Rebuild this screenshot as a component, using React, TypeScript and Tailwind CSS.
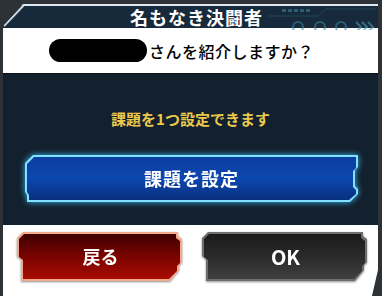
const font = { fontFamily: '"Noto Sans CJK JP", "Noto Sans", sans-serif' };

function HeaderDeco() {
  return (
    <svg width="110" height="24" viewBox="0 0 110 24" className="absolute right-0 top-0 opacity-60">
      <g fill="#3f7f96">
        <rect x="14" y="3" width="4" height="3" />
        <rect x="20" y="3" width="4" height="3" />
        <rect x="26" y="3" width="4" height="3" />
        <rect x="32" y="3" width="4" height="3" />
        <rect x="38" y="3" width="4" height="3" />
      </g>
      <path d="M0 10 L50 10 L58 3 L108 3" stroke="#2a5a6e" strokeWidth="1" fill="none" />
      <g stroke="#3a8099" strokeWidth="2" fill="none">
        <circle cx="30" cy="21" r="5" />
        <circle cx="52" cy="21" r="5" />
        <circle cx="73" cy="21" r="5" />
      </g>
      <g stroke="#4a9ab4" strokeWidth="2" fill="none">
        <path d="M88 16 L93 21 L88 26" />
        <path d="M94 16 L99 21 L94 26" />
        <path d="M100 16 L105 21 L100 26" />
      </g>
    </svg>
  );
}

function GameButton({
  label,
  outer,
  inner,
  text,
}: {
  label: string;
  outer: string;
  inner: string;
  text: string;
}) {
  return (
    <div className="drop-shadow-[0_1px_1px_rgba(0,0,0,0.45)]">
      <div
        className={`w-[165px] h-[49px] p-[2px] ${outer} [clip-path:polygon(6px_0,calc(100%_-_4px)_0,calc(100%_-_4px)_4px,100%_7px,100%_30px,calc(100%_-_3px)_33px,calc(100%_-_3px)_38px,calc(100%_-_12px)_100%,4px_100%,4px_27px,0_24px,0_6px)]`}
      >
        <div
          className={`w-full h-full flex items-center justify-center ${inner} [clip-path:polygon(5px_0,calc(100%_-_4px)_0,calc(100%_-_4px)_4px,100%_7px,100%_29px,calc(100%_-_3px)_32px,calc(100%_-_3px)_37px,calc(100%_-_11px)_100%,4px_100%,4px_26px,0_23px,0_5px)]`}
        >
          <span className={`${text} font-bold text-white pl-[2px]`} style={font}>
            {label}
          </span>
        </div>
      </div>
    </div>
  );
}

export default function App() {
  return (
    <div className="w-[382px] h-[296px] overflow-hidden bg-[#2c3236] pt-[4px] pl-[3px]" style={font}>
      <div className="w-[375px] h-[292px] flex flex-col bg-[#0f1822] [clip-path:polygon(20px_0,100%_0,100%_calc(100%_-_26px),calc(100%_-_6px)_100%,0_100%,0_22px)]">
        {/* header */}
        <div className="relative h-[24px] shrink-0 bg-[#172a3c] border-t-2 border-[#dfe7ee] flex items-end justify-center pl-[12px]">
          <HeaderDeco />
          <svg width="22" height="24" viewBox="0 0 22 24" className="absolute left-0 -top-[2px]">
            <path d="M21 1 L1 22" stroke="#c9d6e0" strokeWidth="2" />
          </svg>
          <span className="relative text-[18px] leading-[22px] font-bold text-white tracking-[1px]">
            名もなき決闘者
          </span>
        </div>

        {/* question */}
        <div className="h-[46px] shrink-0 bg-white border-b border-[#0a1016] flex items-center justify-center pr-[18px]">
          <div className="w-[98px] h-[23px] rounded-full bg-black" />
          <span className="text-[16px] font-medium text-black leading-none pl-[2px] tracking-[0.5px]">
            さんを紹介しますか？
          </span>
        </div>

        {/* body */}
        <div className="h-[151px] shrink-0 bg-[#13202d] flex flex-col items-center pt-[34px]">
          <span className="text-[15px] leading-[22px] font-bold text-[#ebc94c]">課題を1つ設定できます</span>
          <div className="mt-[25px] ml-[2px] drop-shadow-[0_0_3px_#36b6ee]">
            <div className="w-[333px] h-[47px] p-[2px] bg-[#7fe0ff] [clip-path:polygon(8px_0,100%_0,100%_12px,calc(100%_-_3px)_15px,calc(100%_-_3px)_31px,100%_34px,100%_39px,calc(100%_-_8px)_100%,2px_100%,2px_40px,0_37px,0_8px)]">
              <div className="w-full h-full flex items-center justify-center bg-gradient-to-b from-[#0b3e9e] via-[#0c47b0] to-[#09307e] [clip-path:polygon(7px_0,100%_0,100%_11px,calc(100%_-_3px)_14px,calc(100%_-_3px)_30px,100%_33px,100%_37px,calc(100%_-_7px)_100%,2px_100%,2px_38px,0_35px,0_7px)]">
                <span className="text-[18px] font-bold text-white tracking-[1px]">課題を設定</span>
              </div>
            </div>
          </div>
        </div>

        {/* actions */}
        <div className="flex-1 bg-white flex items-start gap-[20px] pl-[14px] pt-[7px]">
          <GameButton
            label="戻る"
            outer="bg-[#f4a888]"
            inner="bg-gradient-to-b from-[#3e0000] via-[#7a0400] to-[#a80d02]"
            text="text-[18px]"
          />
          <GameButton
            label="OK"
            outer="bg-[#6e6e6e]"
            inner="bg-gradient-to-b from-[#1a1a1a] via-[#2a2a2a] to-[#404040]"
            text="text-[20px]"
          />
        </div>
      </div>
    </div>
  );
}
